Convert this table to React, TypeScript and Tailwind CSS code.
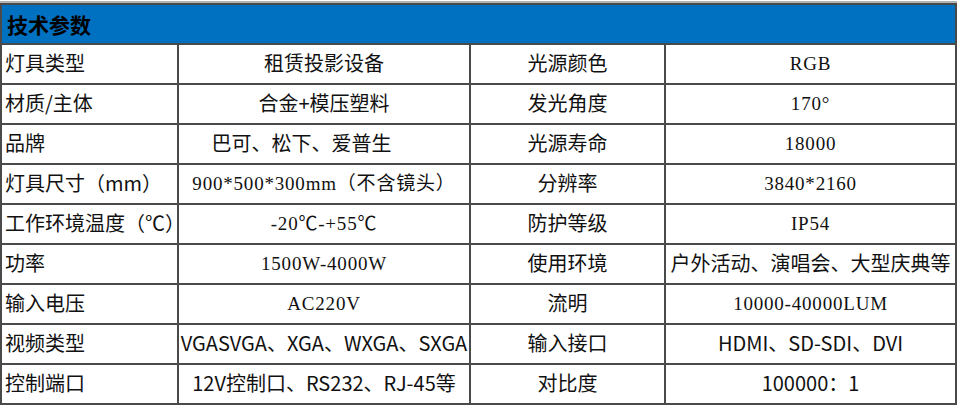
import React from 'react';

type Cell = { text: string; font?: 'cjk' | 'serif' | 'sans'; extra?: string };

const rows: [Cell, Cell, Cell, Cell][] = [
  [{ text: '灯具类型' }, { text: '租赁投影设备' }, { text: '光源颜色' }, { text: 'RGB', font: 'serif' }],
  [{ text: '材质/主体' }, { text: '合金+模压塑料' }, { text: '发光角度' }, { text: '170°', font: 'serif' }],
  [{ text: '品牌' }, { text: '巴可、松下、爱普生', extra: 'pr-[45px]' }, { text: '光源寿命' }, { text: '18000', font: 'serif' }],
  [{ text: '灯具尺寸（mm）' }, { text: '900*500*300mm（不含镜头）', font: 'serif' }, { text: '分辨率' }, { text: '3840*2160', font: 'serif' }],
  [{ text: '工作环境温度（℃）' }, { text: '-20℃-+55℃', font: 'serif' }, { text: '防护等级' }, { text: 'IP54', font: 'serif' }],
  [{ text: '功率' }, { text: '1500W-4000W', font: 'serif' }, { text: '使用环境' }, { text: '户外活动、演唱会、大型庆典等' }],
  [{ text: '输入电压' }, { text: 'AC220V', font: 'serif' }, { text: '流明' }, { text: '10000-40000LUM', font: 'serif' }],
  [{ text: '视频类型' }, { text: 'VGASVGA、XGA、WXGA、SXGA', font: 'sans' }, { text: '输入接口' }, { text: 'HDMI、SD-SDI、DVI', font: 'sans' }],
  [{ text: '控制端口' }, { text: '12V控制口、RS232、RJ-45等', font: 'sans' }, { text: '对比度' }, { text: '100000：1', font: 'sans' }],
];

const fontClass = {
  cjk: "font-['Noto_Sans_CJK_SC',sans-serif] text-[20px]",
  serif: "font-['Liberation_Serif','Noto_Sans_CJK_SC',serif] text-[19px] tracking-[0.8px]",
  sans: "font-['Noto_Sans_CJK_SC',sans-serif] text-[20px]",
};

export default function App() {
  return (
    <div className="w-[957px] h-[413px] bg-white overflow-hidden">
      <div className="h-[3px] border-t-[1px] border-t-white bg-[#b4b4b4]" />
      <div className="grid grid-cols-[175px_290px_193px_289px] gap-[2px] p-[2px] bg-[#4a4a4a]">
        <div className="col-span-4 h-[38px] bg-[#0070c0] flex items-center pl-[5px]">
          <span className="font-['Noto_Sans_CJK_SC',sans-serif] text-[21px] font-bold text-black leading-none">
            技术参数
          </span>
        </div>
        {rows.map((row, i) =>
          row.map((cell, j) => (
            <div
              key={`${i}-${j}`}
              className={`h-[38px] bg-white flex items-center overflow-hidden whitespace-nowrap text-[#111] leading-none pb-[2px] ${
                j === 0 ? 'justify-start pl-[3px]' : 'justify-center'
              } ${fontClass[cell.font ?? 'cjk']} ${cell.extra ?? ''}`}
            >
              {cell.text}
            </div>
          ))
        )}
      </div>
    </div>
  );
}
